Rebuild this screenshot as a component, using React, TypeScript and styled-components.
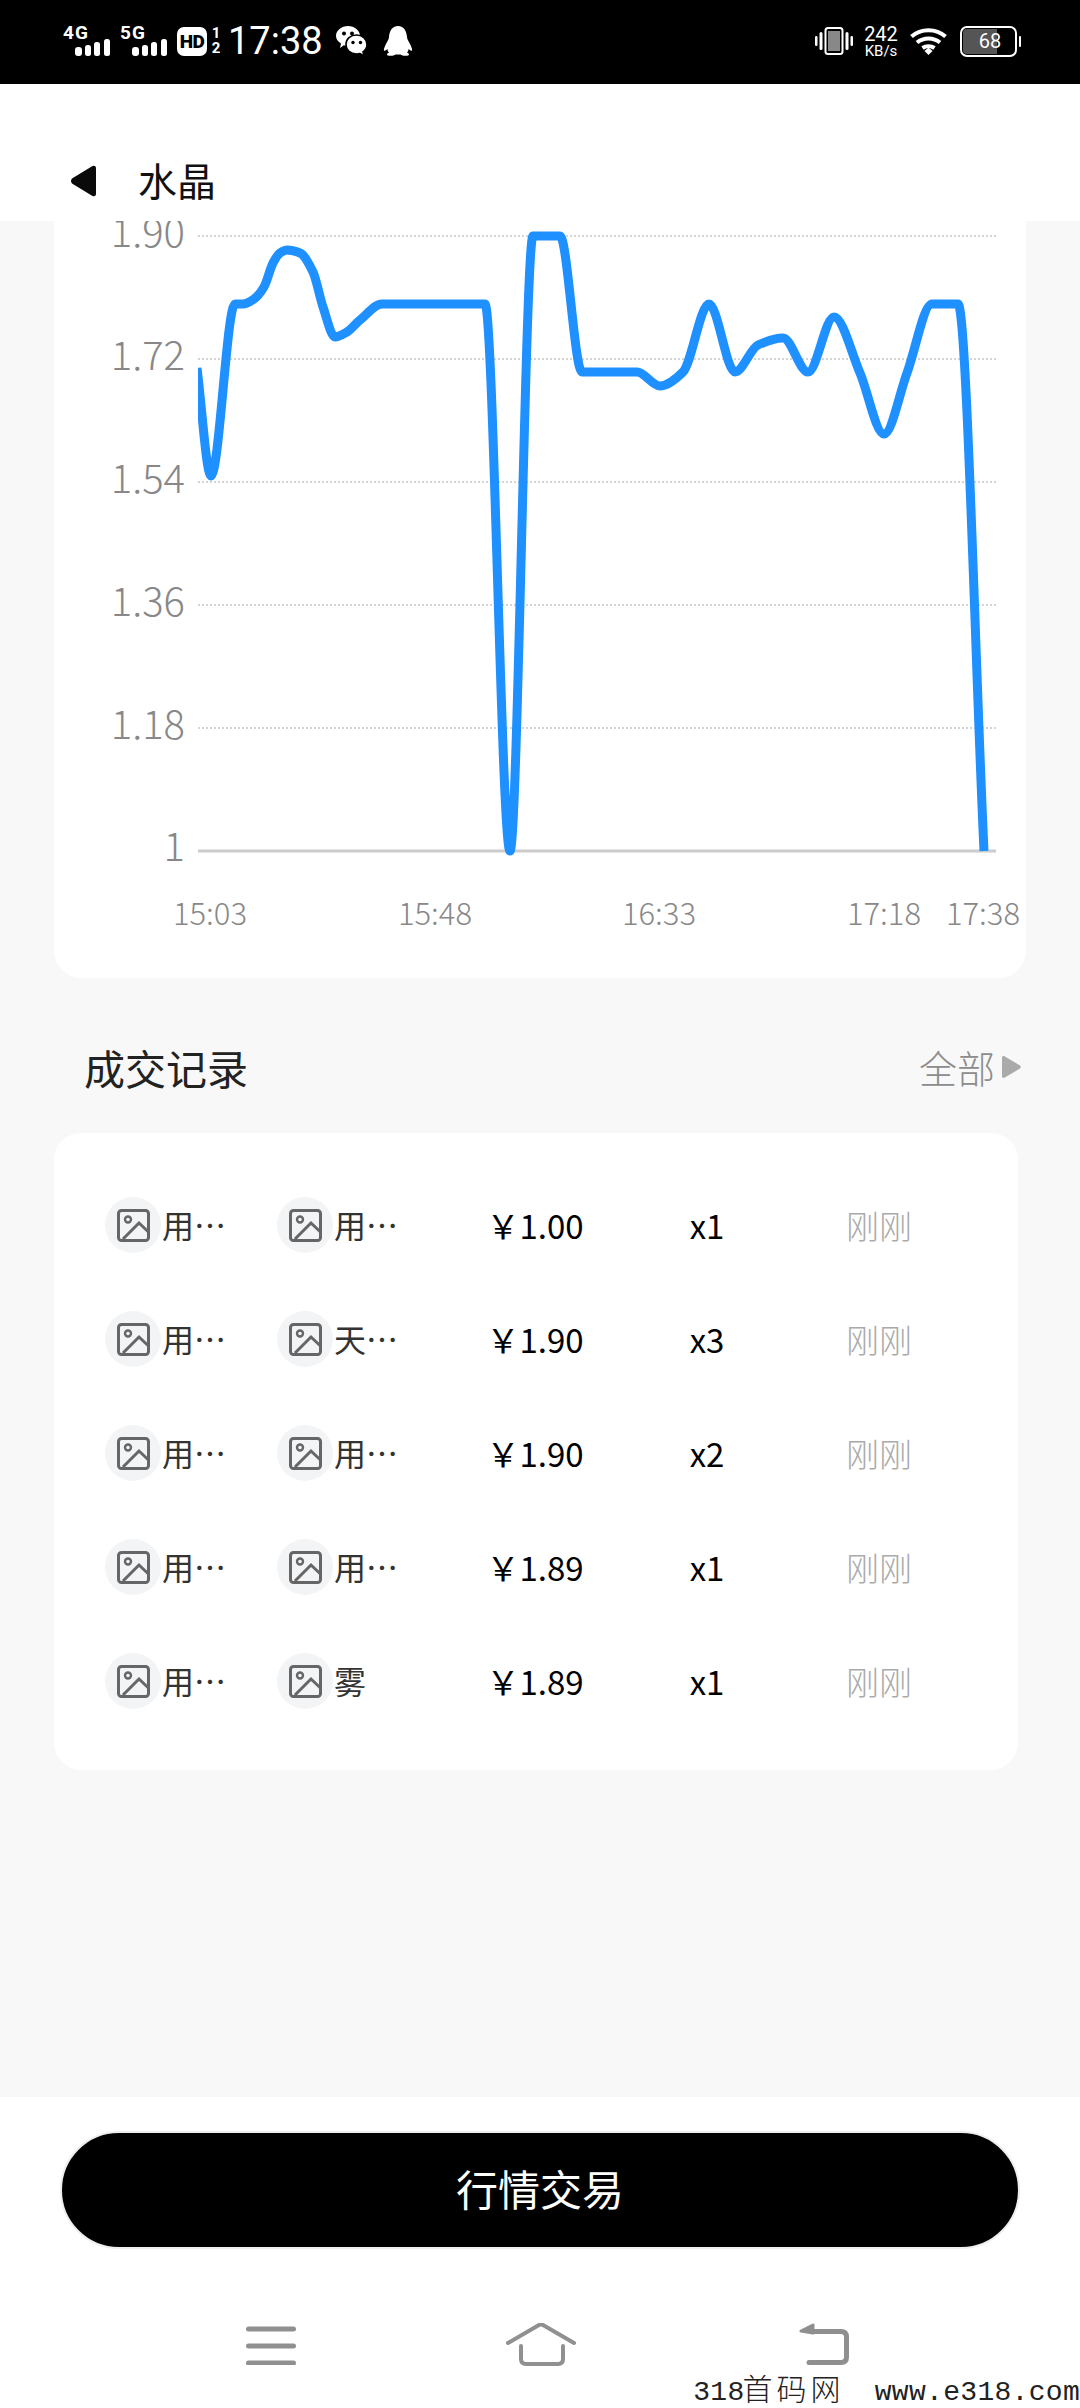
import React from "react";
import styled, { createGlobalStyle } from "styled-components";

const SANS = `"Noto Sans CJK SC", "Noto Sans", sans-serif`;

const GlobalStyle = createGlobalStyle`
  html, body {
    margin: 0;
    padding: 0;
    background: #fff;
    font-family: ${SANS};
  }
`;

const trades = [
  { buyer: "用…", seller: "用…", price: "1.00", count: "x1" },
  { buyer: "用…", seller: "天…", price: "1.90", count: "x3" },
  { buyer: "用…", seller: "用…", price: "1.90", count: "x2" },
  { buyer: "用…", seller: "用…", price: "1.89", count: "x1" },
  { buyer: "用…", seller: "雾", price: "1.89", count: "x1" },
];

const yAxis = [
  { label: "1.90", y: 236 },
  { label: "1.72", y: 359 },
  { label: "1.54", y: 482 },
  { label: "1.36", y: 605 },
  { label: "1.18", y: 728 },
];

const xAxis = [
  { label: "15:03", x: 210 },
  { label: "15:48", x: 435 },
  { label: "16:33", x: 659 },
  { label: "17:18", x: 884 },
  { label: "17:38", x: 983 },
];

const curve: [number, number][] = [
  [197, 368], [211, 476], [235, 304], [243, 304], [254, 299], [264, 287], [273, 263], [280, 253], [287, 250],
  [300, 253], [313, 272], [323, 307], [335, 337], [347, 332], [360, 320], [382, 304], [485, 304],
  [510, 851], [533, 236], [560, 236], [582, 372], [637, 372], [660, 386], [683, 372], [709, 304],
  [735, 372], [758, 345], [783, 338], [808, 372], [834, 317], [860, 373], [884, 434], [907, 373],
  [932, 304], [958, 304], [984, 851],
];

// monotone cubic through the points, the same look as the chart lib's smooth line
const smoothPath = (pts: [number, number][]) => {
  const slopes = pts.slice(1).map((p, i) => (p[1] - pts[i][1]) / (p[0] - pts[i][0]));
  const tangents = pts.map((_, i) => {
    if (i === 0) return slopes[0];
    if (i === pts.length - 1) return slopes[i - 1];
    const a = slopes[i - 1];
    const b = slopes[i];
    if (a * b <= 0) return 0;
    return (2 * a * b) / (a + b);
  });
  let d = `M${pts[0][0]} ${pts[0][1]}`;
  for (let i = 0; i < pts.length - 1; i++) {
    const dx = (pts[i + 1][0] - pts[i][0]) / 3;
    d += ` C${pts[i][0] + dx} ${pts[i][1] + tangents[i] * dx} ${pts[i + 1][0] - dx} ${pts[i + 1][1] - tangents[i + 1] * dx} ${pts[i + 1][0]} ${pts[i + 1][1]}`;
  }
  return d;
};

const Page = styled.div`
  position: relative;
  width: 1080px;
  height: 2408px;
  display: flex;
  flex-direction: column;
  overflow: hidden;
  background: #fff;
`;

const StatusBar = styled.div`
  flex: none;
  height: 84px;
  background: #000;
  color: #fff;
  display: flex;
  align-items: center;
  justify-content: space-between;
  padding: 0 63px 2px 63px;
  box-sizing: border-box;
`;

const StatusGroup = styled.div`
  display: flex;
  align-items: center;
`;

const Signal = styled.div<{ $gap?: number }>`
  position: relative;
  width: 47px;
  height: 30px;
  margin-left: ${(p) => p.$gap || 0}px;
`;

const SignalLabel = styled.span`
  position: absolute;
  left: 0;
  top: -3px;
  font: 700 19px/20px "Roboto", sans-serif;
  letter-spacing: 1px;
`;

const SignalBars = styled.svg`
  position: absolute;
  right: 0;
  bottom: 0;
  display: block;
`;

const HdBadge = styled.span`
  width: 30px;
  height: 29px;
  margin-left: 10px;
  border-radius: 7px;
  background: #fff;
  color: #000;
  font: 900 19px/29px "Roboto", sans-serif;
  text-align: center;
  letter-spacing: -0.5px;
`;

const SimSlots = styled.span`
  width: 12px;
  margin-left: 3px;
  display: flex;
  flex-direction: column;
  align-items: center;
  font: 700 15px/15px "Roboto", sans-serif;
`;

const Clock = styled.span`
  margin-left: 6px;
  font: 400 38px/40px "Roboto", sans-serif;
`;

const NoticeIcon = styled.svg<{ $gap: number }>`
  display: block;
  margin-left: ${(p) => p.$gap}px;
`;

const Speed = styled.span`
  width: 38px;
  margin: 0 10px 0 9px;
  display: flex;
  flex-direction: column;
  align-items: center;
  font: 400 20px/19px "Roboto", sans-serif;

  small {
    font-size: 15px;
    line-height: 14px;
  }
`;

const Battery = styled.span`
  position: relative;
  width: 57px;
  height: 31px;
  margin-left: 13px;
  box-sizing: border-box;
  border: 2px solid #fff;
  border-radius: 7px;
  font: 400 20px/27px "Roboto", sans-serif;
  text-align: center;
  padding-left: 3px;

  &::before {
    content: "";
    position: absolute;
    left: 1px;
    top: 1px;
    bottom: 1px;
    width: 34px;
    border-radius: 4px 0 0 4px;
    background: #555;
  }

  &::after {
    content: "";
    position: absolute;
    right: -6px;
    top: 8px;
    width: 2px;
    height: 11px;
    border-radius: 1px;
    background: #fff;
  }
`;

const BatteryLevel = styled.span`
  position: relative;
`;

const Header = styled.div`
  flex: none;
  height: 137px;
  box-sizing: border-box;
  padding: 72px 0 0 70px;
  background: #fff;
`;

const HeaderRow = styled.div`
  height: 44px;
  display: flex;
  align-items: flex-start;
  overflow: hidden;
`;

const BackArrow = styled.svg`
  display: block;
  margin-top: 9px;
`;

const PageTitle = styled.h1`
  margin: 1px 0 0 42px;
  font-size: 39px;
  font-weight: 400;
  line-height: 44px;
  color: #111;
`;

const Scroller = styled.div`
  flex: 1;
  min-height: 0;
  overflow: hidden;
  background: #f8f8f8;
`;

const ChartCard = styled.div`
  width: 972px;
  height: 757px;
  margin-left: 54px;
  background: #fff;
  border-radius: 0 0 27px 27px;
`;

const ChartSvg = styled.svg`
  display: block;
`;

const AxisLabel = styled.text<{ $anchor: string; $size: number }>`
  fill: #888;
  font-family: ${SANS};
  font-weight: 300;
  font-size: ${(p) => p.$size}px;
  text-anchor: ${(p) => p.$anchor};
`;

const SectionHead = styled.div`
  height: 155px;
  box-sizing: border-box;
  padding: 22px 59px 0 84px;
  display: flex;
  align-items: center;
  justify-content: space-between;
`;

const SectionTitle = styled.h2`
  margin: 0;
  font-size: 41px;
  font-weight: 400;
  color: #222;
`;

const AllLink = styled.span`
  display: flex;
  align-items: center;
  gap: 7px;
  font-size: 38px;
  font-weight: 300;
  color: #8c8c8c;
`;

const TradeCard = styled.div`
  width: 964px;
  height: 637px;
  box-sizing: border-box;
  margin-left: 54px;
  padding: 38px 0 0 51px;
  background: #fff;
  border-radius: 27px;
`;

const TradeRow = styled.div`
  height: 114px;
  display: grid;
  grid-template-columns: repeat(5, 172px);
  align-items: center;
  font-size: 33px;
  line-height: 48px;
  color: #000;
`;

const UserCell = styled.div`
  display: flex;
  align-items: center;
  gap: 1px;
  margin-top: -6px;
  font-size: 32px;
`;

const Avatar = styled.span`
  width: 56px;
  height: 56px;
  flex: none;
  border-radius: 50%;
  background: #f3f4f6;
  display: flex;
  align-items: center;
  justify-content: center;
`;

const UserName = styled.span`
  margin-bottom: 3px;
  color: #333;
  line-height: 44px;
`;

const ValueCell = styled.div`
  margin-top: -6px;
  text-align: center;
`;

const TimeCell = styled.div`
  margin-top: -6px;
  text-align: center;
  font-size: 33px;
  font-weight: 300;
  color: #aaa;
`;

const Footer = styled.div`
  flex: none;
  height: 311px;
  box-sizing: border-box;
  padding-top: 34px;
  background: #fff;
`;

const TradeButton = styled.button`
  display: block;
  width: 960px;
  height: 118px;
  margin: 0 0 0 60px;
  padding: 0 0 6px;
  border: 2px solid #eee;
  border-radius: 59px;
  background: #000;
  color: #fff;
  font-family: ${SANS};
  font-size: 42px;
`;

const NavBar = styled.div`
  display: flex;
  align-items: flex-start;
  margin-top: 74px;
  padding-left: 246px;
`;

const NavIcon = styled.svg<{ $gap?: number }>`
  display: block;
  margin-left: ${(p) => p.$gap || 0}px;
`;

const Watermark = styled.div`
  position: absolute;
  right: 0;
  bottom: -2px;
  font: 400 28px/34px "Liberation Mono", monospace;
  letter-spacing: 0.3px;
  color: #222;
  white-space: pre;

  span {
    margin: 0 -4px 0 -2px;
    font-family: ${SANS};
    font-size: 30px;
    font-weight: 300;
    letter-spacing: 4px;
  }
`;

const Bars = () => (
  <SignalBars width="35" height="17" viewBox="0 0 35 17" fill="#fff">
    <rect x="0" y="8" width="7" height="9" rx="3" />
    <rect x="10" y="6" width="6" height="11" rx="2.5" />
    <rect x="19" y="3" width="6" height="14" rx="2.5" />
    <rect x="29" y="0" width="6" height="17" rx="2.5" />
  </SignalBars>
);

const ImageIcon = () => (
  <svg width="33" height="33" viewBox="0 0 33 33" fill="none" stroke="#666" strokeWidth="3">
    <rect x="1.5" y="1.5" width="30" height="30" rx="3" />
    <circle cx="11" cy="10.5" r="3" strokeWidth="2.4" />
    <path d="M6 30 L22 14 L31.5 23" />
  </svg>
);

const UserTag = ({ name }: { name: string }) => (
  <UserCell>
    <Avatar>
      <ImageIcon />
    </Avatar>
    <UserName>{name}</UserName>
  </UserCell>
);

const App = () => {
  return (
    <Page>
      <GlobalStyle />
      <StatusBar>
        <StatusGroup>
          <Signal>
            <SignalLabel>4G</SignalLabel>
            <Bars />
          </Signal>
          <Signal $gap={10}>
            <SignalLabel>5G</SignalLabel>
            <Bars />
          </Signal>
          <HdBadge>HD</HdBadge>
          <SimSlots>
            <span>1</span>
            <span>2</span>
          </SimSlots>
          <Clock>17:38</Clock>
          <NoticeIcon $gap={13} width="31" height="30" viewBox="0 0 31 30">
            <path d="M12 0 C18.5 0 24 4.5 24 10 C24 15.5 18.5 20 12 20 C10.5 20 9 19.8 7.8 19.3 L4 22 L5 17.5 C2 15.6 0 13 0 10 C0 4.5 5.5 0 12 0 Z" fill="#fff" />
            <circle cx="8" cy="7.5" r="2" fill="#000" />
            <circle cx="16" cy="7.5" r="2" fill="#000" />
            <path d="M20.5 9 C26 9 31 13 31 18.5 C31 21.5 29.5 24 27 25.8 L28 30 L24 27.6 C22.8 28 21.8 28 20.5 28 C14.5 28 10 24 10 18.5 C10 13 14.5 9 20.5 9 Z" fill="#fff" stroke="#000" strokeWidth="1.6" />
            <circle cx="17" cy="16.5" r="1.7" fill="#000" />
            <circle cx="24.5" cy="16.5" r="1.7" fill="#000" />
          </NoticeIcon>
          <NoticeIcon $gap={16} width="30" height="30" viewBox="0 0 30 30">
            <path d="M15 0 C21 0 23.5 5 24 11 C24.2 13.5 25.5 15 27 18 C28.5 21 29.5 23.5 29 24.5 C28.5 25.3 26.5 24 25.5 23 C25.5 24.5 25 25.5 24 26.5 C26 27.5 26.5 28.5 25.5 29.2 C24 30.2 19 30 17.5 28.5 L12.5 28.5 C11 30 6 30.2 4.5 29.2 C3.5 28.5 4 27.5 6 26.5 C5 25.5 4.5 24.5 4.5 23 C3.5 24 1.5 25.3 1 24.5 C0.5 23.5 1.5 21 3 18 C4.5 15 5.8 13.5 6 11 C6.5 5 9 0 15 0 Z" fill="#fff" />
          </NoticeIcon>
        </StatusGroup>
        <StatusGroup>
          <svg width="38" height="28" viewBox="0 0 38 28" fill="none">
            <rect x="10.5" y="1" width="17" height="26" rx="2.5" stroke="#fff" strokeWidth="2" />
            <rect x="13" y="4" width="12" height="20" fill="#888" />
            <rect x="4.5" y="5" width="3" height="18" rx="1.5" fill="#fff" />
            <rect x="30.5" y="5" width="3" height="18" rx="1.5" fill="#fff" />
            <rect x="0" y="9" width="2.5" height="10" rx="1.2" fill="#fff" />
            <rect x="35.5" y="9" width="2.5" height="10" rx="1.2" fill="#fff" />
          </svg>
          <Speed>
            <span>242</span>
            <small>KB/s</small>
          </Speed>
          <svg width="37" height="28" viewBox="0 0 37 28" fill="none" stroke="#fff" strokeWidth="4">
            <path d="M1.5 9.5 C11 1 26 1 35.5 9.5" />
            <path d="M7 15.5 C13.5 10 23.5 10 30 15.5" />
            <path d="M12.5 21 C16 18.5 21 18.5 24.5 21" />
            <path d="M14.5 24 L18.5 20.5 L22.5 24 L18.5 28 Z" fill="#fff" stroke="none" />
          </svg>
          <Battery>
            <BatteryLevel>68</BatteryLevel>
          </Battery>
        </StatusGroup>
      </StatusBar>

      <Header>
        <HeaderRow>
          <BackArrow width="26" height="32" viewBox="0 0 26 32">
            <path d="M22.5 1 Q26 0 26 3.5 L26 28.5 Q26 32 22.5 31 L2 18.5 Q0 16 2 13.5 Z" fill="#0a0a0a" />
          </BackArrow>
          <PageTitle>水晶</PageTitle>
        </HeaderRow>
      </Header>

      <Scroller>
        <ChartCard>
          <ChartSvg width="972" height="757" viewBox="54 221 972 757">
            <defs>
              <clipPath id="plot">
                <rect x="198" y="221" width="798" height="640" />
              </clipPath>
            </defs>
            {yAxis.map((t) => (
              <g key={t.label}>
                <line x1="198" x2="996" y1={t.y} y2={t.y} stroke="#d4d4d4" strokeWidth="2" strokeDasharray="2 2" />
                <AxisLabel x="185" y={t.y + 11} $anchor="end" $size={40}>
                  {t.label}
                </AxisLabel>
              </g>
            ))}
            <line x1="198" x2="996" y1="851" y2="851" stroke="#ccc" strokeWidth="3" />
            <AxisLabel x="185" y="861" $anchor="end" $size={40}>
              1
            </AxisLabel>
            {xAxis.map((t) => (
              <AxisLabel key={t.label} x={t.x} y="925" $anchor="middle" $size={31}>
                {t.label}
              </AxisLabel>
            ))}
            <path d={smoothPath(curve)} fill="none" stroke="#1e90ff" strokeWidth="9" clipPath="url(#plot)" />
          </ChartSvg>
        </ChartCard>

        <SectionHead>
          <SectionTitle>成交记录</SectionTitle>
          <AllLink>
            全部
            <svg width="19" height="22" viewBox="0 0 20 23">
              <path d="M0 2 C0 0 1.5 -0.5 3 0.5 L19 10 C20 10.8 20 12 19 13 L3 22.5 C1.5 23.5 0 23 0 21 Z" fill="#aaa" />
            </svg>
          </AllLink>
        </SectionHead>

        <TradeCard>
          {trades.map((t, i) => (
            <TradeRow key={i}>
              <UserTag name={t.buyer} />
              <UserTag name={t.seller} />
              <ValueCell>￥{t.price}</ValueCell>
              <ValueCell>{t.count}</ValueCell>
              <TimeCell>刚刚</TimeCell>
            </TradeRow>
          ))}
        </TradeCard>
      </Scroller>

      <Footer>
        <TradeButton>行情交易</TradeButton>
        <NavBar>
          <NavIcon width="50" height="42" viewBox="0 0 50 42" fill="none" stroke="#909090" strokeWidth="5" strokeLinecap="round">
            <path d="M2.5 6 H47.5 M2.5 23 H47.5 M2.5 40 H47.5" />
          </NavIcon>
          <NavIcon $gap={210} width="70" height="43" viewBox="0 0 70 43" fill="none" stroke="#909090" strokeWidth="4" strokeLinecap="round" strokeLinejoin="round">
            <path d="M2 20 L33 2 Q35 1 37 2 L68 20" />
            <path d="M15 23 V36 Q15 41 20 41 H52 Q57 41 57 36 V23" />
          </NavIcon>
          <NavIcon $gap={223} width="50" height="42" viewBox="0 0 50 42" fill="none" stroke="#8f8f8f" strokeWidth="5" strokeLinecap="round" strokeLinejoin="round">
            <path d="M14 8.5 H42 Q47.5 8.5 47.5 14 V34 Q47.5 39.5 42 39.5 H10" />
            <path d="M2 8 L14 2 V10 Z" fill="#8f8f8f" strokeWidth="3" />
          </NavIcon>
        </NavBar>
      </Footer>

      <Watermark>
        318<span>首码网</span>{"  "}www.e318.com
      </Watermark>
    </Page>
  );
};

export default App;
